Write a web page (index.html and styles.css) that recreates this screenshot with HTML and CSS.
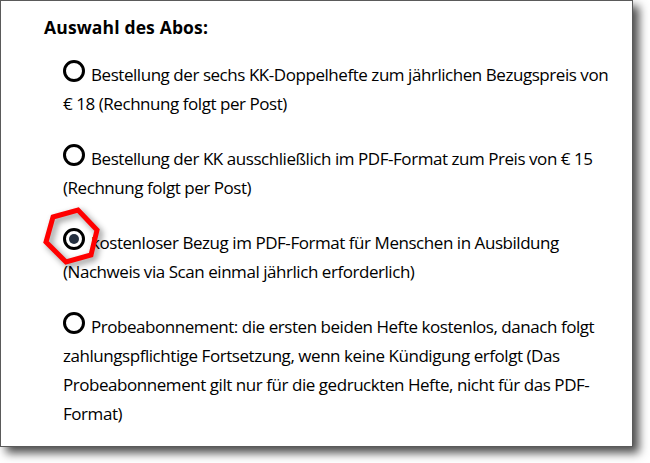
FILE: index.html
```html
<!DOCTYPE html>
<html lang="de">
<head>
<meta charset="utf-8">
<title>Auswahl des Abos</title>
<link rel="stylesheet" href="styles.css">
</head>
<body>
<div class="panel">
  <h2 class="heading">Auswahl des Abos:</h2>
  <div class="options">
    <p class="option"><span class="radio"></span>Bestellung der sechs KK-Doppelhefte zum jährlichen Bezugspreis von<br>€ 18 (Rechnung folgt per Post)</p>
    <p class="option"><span class="radio"></span>Bestellung der KK ausschließlich im PDF-Format zum Preis von € 15<br>(Rechnung folgt per Post)</p>
    <p class="option"><span class="radio checked"></span>kostenloser Bezug im PDF-Format für Menschen in Ausbildung<br>(Nachweis via Scan einmal jährlich erforderlich)</p>
    <p class="option"><span class="radio"></span>Probeabonnement: die ersten beiden Hefte kostenlos, danach folgt<br>zahlungspflichtige Fortsetzung, wenn keine Kündigung erfolgt (Das<br>Probeabonnement gilt nur für die gedruckten Hefte, nicht für das PDF-<br>Format)</p>
  </div>
  <svg class="marker" width="64" height="66" viewBox="0 0 64 66" aria-hidden="true">
    <polygon points="13,13 38,6 57,26 51,51 26,58 6,38" fill="none" stroke="#ff0000" stroke-width="5" stroke-linejoin="miter"/>
  </svg>
</div>
</body>
</html>
```

FILE: styles.css
```css
html, body {
  margin: 0;
  padding: 0;
  background: #ffffff;
}
body {
  width: 650px;
  height: 463px;
  overflow: hidden;
  font-family: "Open Sans", "Noto Sans", sans-serif;
  color: #000;
}
.panel {
  position: relative;
  box-sizing: border-box;
  width: 633px;
  height: 447px;
  border: 1px solid #5a5a5a;
  background: #fff;
  box-shadow: 6px 6px 9px rgba(0, 0, 0, 0.7);
  padding: 12px 0 0 43px;
}
.heading {
  margin: 0;
  font-size: 17.5px;
  font-weight: 700;
  line-height: 29px;
  letter-spacing: 0.15px;
}
.options {
  margin: 18px 0 0 19px;
  display: flex;
  flex-direction: column;
  gap: 26px;
}
.option {
  margin: 0;
  font-size: 17px;
  line-height: 29px;
  letter-spacing: -0.45px;
  white-space: nowrap;
}
.radio {
  display: inline-block;
  box-sizing: border-box;
  width: 22px;
  height: 22px;
  border: 3px solid #000;
  border-radius: 50%;
  margin-right: 6px;
  vertical-align: -1px;
  position: relative;
}
.radio.checked::after {
  content: "";
  position: absolute;
  left: 3px;
  top: 3px;
  width: 10px;
  height: 10px;
  border-radius: 50%;
  background: #253040;
}
.marker {
  position: absolute;
  left: 39px;
  top: 203px;
  filter: drop-shadow(3px 3px 3px rgba(0, 0, 0, 0.45));
}
```
